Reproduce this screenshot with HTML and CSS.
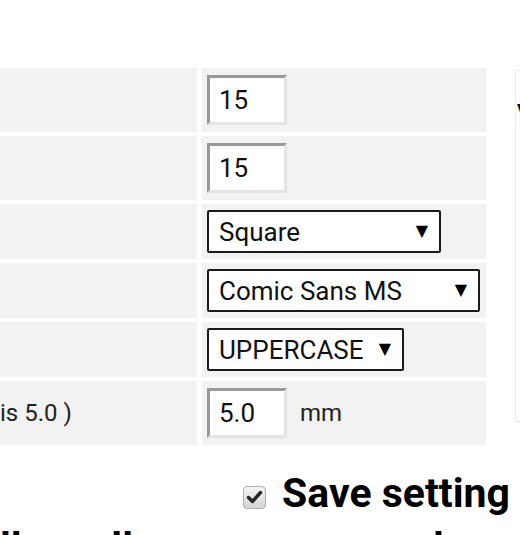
FILE: index.html
```html
<!DOCTYPE html>
<html>
<head>
<meta charset="utf-8">
<link rel="stylesheet" href="styles.css">
</head>
<body>
<div class="page">
  <div class="top">
    <div class="settings">
      <div class="label"></div>
      <div class="field tall"><input class="num" type="text" value="15"></div>
      <div class="label"></div>
      <div class="field tall"><input class="num" type="text" value="15"></div>
      <div class="label"></div>
      <div class="field"><div class="select w-square"><span>Square</span><span class="arrow">▼</span></div></div>
      <div class="label"></div>
      <div class="field"><div class="select w-font"><span>Comic Sans MS</span><span class="arrow">▼</span></div></div>
      <div class="label"></div>
      <div class="field"><div class="select w-case"><span>UPPERCASE</span><span class="arrow">▼</span></div></div>
      <div class="label">is 5.0 )</div>
      <div class="field tall"><input class="num" type="text" value="5.0"><span class="unit">mm</span></div>
    </div>
    <aside class="preview"><h2>View</h2></aside>
  </div>
  <div class="save">
    <span class="check"><svg width="21" height="21" viewBox="0 0 21 21"><path d="M4.5 10.5 L8.5 14.5 L16.5 5.5" fill="none" stroke="#262626" stroke-width="3.4" stroke-linecap="round" stroke-linejoin="round"/></svg></span>
    <span class="save-text">Save setting</span>
  </div>
  <p class="note">llam all across our new lure a kiosk</p>
</div>
</body>
</html>
```
FILE: styles.css
```css
html, body {
  margin: 0;
  padding: 0;
  background: #ffffff;
  overflow: hidden;
}
.page {
  width: 520px;
  height: 535px;
  overflow: hidden;
  font-family: Roboto, "Noto Sans", sans-serif;
  color: #111;
}
.top {
  display: flex;
  align-items: flex-start;
  padding-top: 68px;
}
.settings {
  display: grid;
  grid-template-columns: 197px 284px;
  column-gap: 5px;
  row-gap: 4px;
  flex-shrink: 0;
}
.label {
  background: #f2f2f2;
  display: flex;
  align-items: center;
  font-size: 24px;
  color: #222;
}
.field {
  background: #f2f2f2;
  display: flex;
  align-items: center;
  padding: 6px 5px;
}
.field.tall {
  padding: 7px 5px;
}
.num {
  box-sizing: border-box;
  width: 80px;
  height: 50px;
  margin: 0;
  padding: 0 0 0 9px;
  border: 3px solid;
  border-color: #999999 #e4e4e4 #e4e4e4 #999999;
  background: #fff;
  font-family: Roboto, sans-serif;
  font-size: 26px;
  color: #111;
  outline: none;
}
.unit {
  margin-left: 13px;
  font-size: 24px;
  color: #222;
}
.select {
  box-sizing: border-box;
  height: 43px;
  display: flex;
  align-items: center;
  justify-content: space-between;
  padding: 0 11px 0 10px;
  border: 2px solid #1a1a1a;
  border-radius: 2px;
  background: #fff;
  font-size: 26px;
  color: #111;
}
.w-square { width: 234px; }
.w-font { width: 273px; }
.w-case { width: 197px; }
.arrow {
  font-family: "DejaVu Sans", sans-serif;
  font-size: 16px;
  color: #000;
  margin-top: -2px;
}
.preview {
  flex-shrink: 0;
  margin-left: 29px;
  margin-top: 2px;
  width: 200px;
  height: 350px;
  border: 1px solid #ececec;
  background: #fdfdfd;
}
.preview h2 {
  margin: 28px 0 0 1px;
  font-size: 19px;
  font-weight: 700;
  color: #111;
}
.save {
  display: flex;
  align-items: center;
  gap: 16px;
  margin-top: 24px;
  padding-left: 243px;
  height: 48px;
  white-space: nowrap;
}
.check {
  box-sizing: border-box;
  display: flex;
  width: 23px;
  height: 23px;
  flex-shrink: 0;
  margin-top: 8px;
  border: 1px solid #b0b0b0;
  border-radius: 4px;
  background: linear-gradient(#f3f3f3, #d6d6d6);
}
.save-text {
  font-size: 41px;
  font-weight: 700;
  line-height: 48px;
  color: #000;
}
.note {
  margin: 6px 0 0;
  font-size: 41px;
  font-weight: 700;
  line-height: 48px;
  white-space: nowrap;
  color: #000;
}
```
